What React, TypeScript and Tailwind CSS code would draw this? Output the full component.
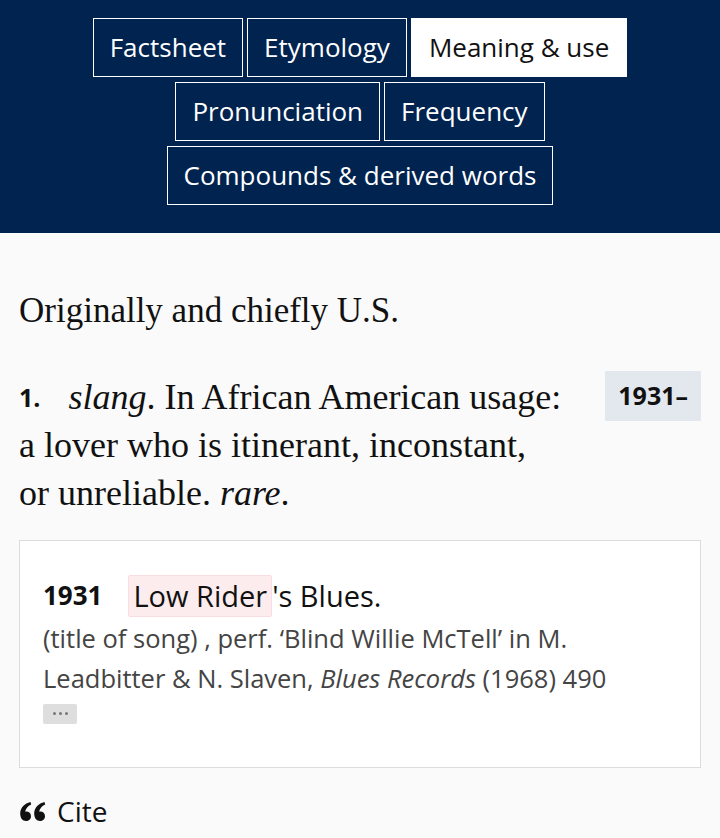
const sans = "font-['Open_Sans','Noto_Sans',sans-serif]";
const serif = "font-['Liberation_Serif','DejaVu_Serif',serif]";

const tabRows = [
  ["Factsheet", "Etymology", "Meaning & use"],
  ["Pronunciation", "Frequency"],
  ["Compounds & derived words"],
];

function QuoteIcon() {
  return (
    <svg width="27" height="22" viewBox="0 0 27 22" fill="#111">
      <path d="M11.5 2 C5.5 3.5 1.5 7.5 1.2 13 C1 18 3.5 21 7 21 C9.8 21 12 19 12 16.2 C12 13.5 10 11.6 7.4 11.6 C6.9 11.6 6.5 11.7 6.1 11.8 C6.8 8.6 8.8 6 12.2 4.5 Z" />
      <path d="M25.5 2 C19.5 3.5 15.5 7.5 15.2 13 C15 18 17.5 21 21 21 C23.8 21 26 19 26 16.2 C26 13.5 24 11.6 21.4 11.6 C20.9 11.6 20.5 11.7 20.1 11.8 C20.8 8.6 22.8 6 26.2 4.5 Z" />
    </svg>
  );
}

export default function App() {
  return (
    <div className={`min-h-[838px] bg-[#fafafa] ${sans}`}>
      <nav className="bg-[#00234f] pt-[18px] pb-[28px] flex flex-col items-center gap-[5px]">
        {tabRows.map((row, i) => (
          <div key={i} className="flex gap-[4px]">
            {row.map((t) => (
              <div
                key={t}
                className={
                  t === "Meaning & use"
                    ? "bg-white text-[#111] border border-white px-[17px] h-[59px] flex items-center text-[26px]"
                    : "text-white border border-white px-[16px] h-[59px] flex items-center text-[26px]"
                }
              >
                {t}
              </div>
            ))}
          </div>
        ))}
      </nav>

      <main className="px-[19px]">
        <p className={`${serif} text-[35px] text-[#111] pt-[54px] leading-[48px]`}>
          Originally and chiefly U.S.
        </p>

        <div className="flex items-start gap-4 mt-[38px]">
          <p className={`${serif} flex-1 text-[36px] leading-[48px] text-[#111]`}>
            <span className={`${sans} font-bold text-[25px] mr-[28px] align-[2px]`}>1.</span>
            <i>slang</i>. In African American usage:
            <br />
            a lover who is itinerant, inconstant,
            <br />
            or unreliable. <i>rare</i>.
          </p>
          <div className="bg-[#e3e7ee] px-[13px] h-[50px] flex items-center text-[25px] font-bold text-[#111] mt-[-2px]">
            1931–
          </div>
        </div>

        <div className="mt-[23px] bg-white border border-[#dcdcdc] px-[23px] pt-[33px] pb-[43px]">
          <div className="flex items-center text-[29px] text-[#111]">
            <span className="font-bold text-[26px] mr-[26px]">1931</span>
            <span className="bg-[#fdecee] border border-[#fbdde1] rounded-[2px] px-[4px] leading-[40px]">
              Low Rider
            </span>
            <span>'s Blues.</span>
          </div>
          <p className="text-[25.5px] leading-[40px] text-[#444]">
            (title of song) , perf. ‘Blind Willie McTell’ in M.
            <br />
            Leadbitter &amp; N. Slaven, <i>Blues Records</i> (1968) 490
          </p>
          <div className="mt-[6px] w-[34px] h-[20px] bg-[#dedede] rounded-[2px] flex items-center justify-center gap-[3px]">
            <span className="w-[3px] h-[3px] rounded-full bg-[#777]" />
            <span className="w-[3px] h-[3px] rounded-full bg-[#777]" />
            <span className="w-[3px] h-[3px] rounded-full bg-[#777]" />
          </div>
        </div>

        <div className="flex items-center gap-[11px] mt-[25px] text-[28px] leading-[36px] text-[#111]">
          <QuoteIcon />
          <span>Cite</span>
        </div>
      </main>
    </div>
  );
}
